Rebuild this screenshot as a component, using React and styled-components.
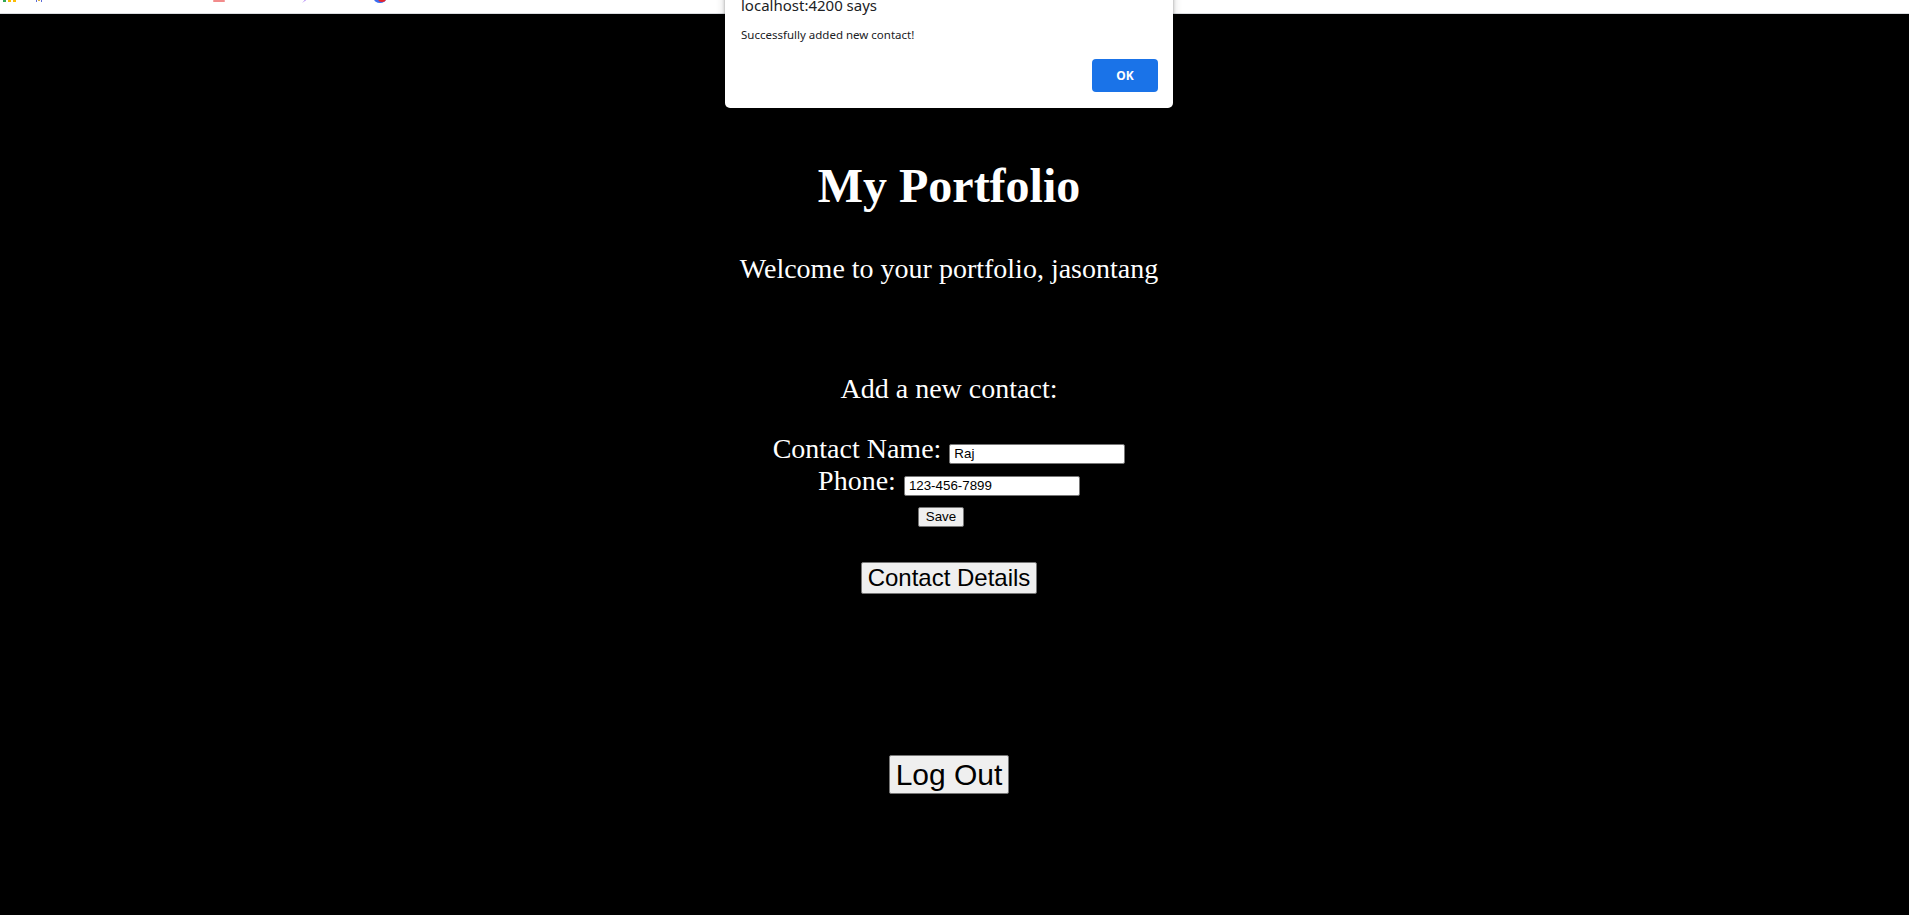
import React from "react";
import styled, { createGlobalStyle } from "styled-components";

const GlobalStyle = createGlobalStyle`
  html, body { margin: 0; padding: 0; background: #000; }
  body { font-family: "Liberation Serif", "Times New Roman", serif; color: #fff; }
  * { box-sizing: border-box; }
`;

const Page = styled.div`
  position: relative;
  min-height: 915px;
  background: #000;
  overflow: hidden;
`;

const TopBar = styled.div`
  height: 14px;
  background: #fff;
  border-bottom: 1px solid #dadce0;
  display: flex;
  align-items: flex-start;
  overflow: hidden;
`;

const Main = styled.main`
  padding-right: 11px;
  display: flex;
  flex-direction: column;
  align-items: center;
  text-align: center;
`;

const Title = styled.h1`
  margin: 144px 0 0;
  font-size: 48px;
  line-height: 56px;
  font-weight: 700;
`;

const Welcome = styled.p`
  margin: 39px 0 0;
  font-size: 28px;
  line-height: 32px;
`;

const SectionHeading = styled.p`
  margin: 88px 0 0;
  font-size: 28px;
  line-height: 32px;
`;

const Form = styled.form`
  margin-top: 28px;
  display: flex;
  flex-direction: column;
  align-items: center;
`;

const FieldRow = styled.div`
  font-size: 28px;
  line-height: 32px;
  white-space: nowrap;
`;

const Input = styled.input`
  margin-left: 8px;
  width: 176px;
  height: 20px;
  padding: 1px 4px;
  border: 1px solid #767676;
  border-radius: 2px;
  background: #fff;
  color: #000;
  font-family: "Liberation Sans", Arial, sans-serif;
  font-size: 13.33px;
  vertical-align: baseline;
`;

const Button = styled.button`
  font-family: "Liberation Sans", Arial, sans-serif;
  font-size: ${(p) => p.$size}px;
  margin-top: ${(p) => p.$top}px;
  margin-right: ${(p) => p.$shift || 0}px;
  height: ${(p) => p.$height}px;
  padding: 0 ${(p) => p.$pad || 6}px;
  line-height: 1;
  color: #000;
  background: #efefef;
  border: 1px solid #767676;
  border-radius: 2px;
  cursor: pointer;
`;

const Dialog = styled.div`
  position: absolute;
  left: 725px;
  top: -16px;
  width: 448px;
  height: 124px;
  background: #fff;
  border-radius: 0 0 5px 5px;
  box-shadow: 0 1px 3px rgba(0, 0, 0, 0.3), 0 4px 10px rgba(0, 0, 0, 0.2);
  padding: 9px 16px 0 16px;
  font-family: "Noto Sans", "Open Sans", sans-serif;
  color: #202124;
  display: flex;
  flex-direction: column;
`;

const DialogTitle = styled.div`
  font-size: 15px;
  line-height: 24px;
`;

const DialogMessage = styled.div`
  margin-top: 10px;
  font-size: 11.5px;
  line-height: 16px;
`;

const DialogActions = styled.div`
  margin-top: 16px;
  display: flex;
  justify-content: flex-end;
`;

const OkButton = styled.button`
  width: 66px;
  height: 33px;
  margin-right: -1px;
  background: #1a73e8;
  color: #fff;
  border: none;
  border-radius: 4px;
  font-family: "Noto Sans", "Open Sans", sans-serif;
  font-weight: 700;
  font-size: 12px;
`;

function BookmarkFragments() {
  return (
    <svg width="420" height="13" viewBox="0 0 420 13">
      <rect x="3" y="0" width="3" height="2" fill="#34a853" />
      <rect x="8" y="0" width="3" height="2" fill="#fbbc05" />
      <rect x="13" y="0" width="3" height="2" fill="#fbbc05" />
      <rect x="36" y="0" width="1" height="2" fill="#5b6bd6" />
      <rect x="41" y="0" width="1" height="2" fill="#5b6bd6" />
      <rect x="38" y="0" width="2" height="1" fill="#e0b040" />
      <rect x="213" y="0" width="12" height="2" rx="1" fill="#f28b8b" />
      <path d="M302 3 L305 0 L306 0 Z" fill="#8a4af3" />
      <ellipse cx="380" cy="-1" rx="6" ry="4" fill="#3a6df0" />
      <ellipse cx="382" cy="-1" rx="4" ry="3" fill="#e8232a" />
    </svg>
  );
}

export default function App() {
  return (
    <Page>
      <GlobalStyle />
      <TopBar>
        <BookmarkFragments />
      </TopBar>
      <Main>
        <Title>My Portfolio</Title>
        <Welcome>Welcome to your portfolio, jasontang</Welcome>
        <SectionHeading>Add a new contact:</SectionHeading>
        <Form onSubmit={(e) => e.preventDefault()}>
          <FieldRow>
            Contact Name:<Input type="text" defaultValue="Raj" />
          </FieldRow>
          <FieldRow>
            Phone:<Input type="text" defaultValue="123-456-7899" />
          </FieldRow>
          <Button type="submit" $size={13.33} $top={10} $height={20} $pad={7} $shift={16}>
            Save
          </Button>
        </Form>
        <Button type="button" $size={24} $top={35} $height={32}>
          Contact Details
        </Button>
        <Button type="button" $size={30} $top={161} $height={39}>
          Log Out
        </Button>
      </Main>
      <Dialog role="alertdialog">
        <DialogTitle>localhost:4200 says</DialogTitle>
        <DialogMessage>Successfully added new contact!</DialogMessage>
        <DialogActions>
          <OkButton>OK</OkButton>
        </DialogActions>
      </Dialog>
    </Page>
  );
}
